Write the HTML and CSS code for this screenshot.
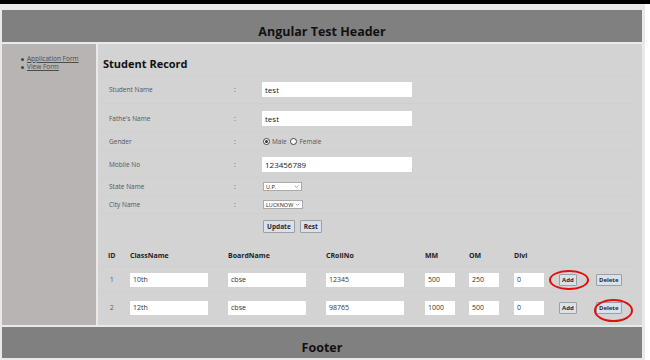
FILE: index.html
```html
<!DOCTYPE html>
<html>
<head>
<meta charset="utf-8">
<link rel="stylesheet" href="styles.css">
</head>
<body>
<div class="topbar"></div>
<div class="page">
  <header class="header"><h1>Angular Test Header</h1></header>
  <div class="main">
    <nav class="sidebar">
      <ul>
        <li><a href="#">Application Form</a></li>
        <li><a href="#">View Form</a></li>
      </ul>
    </nav>
    <section class="content">
      <h2>Student Record</h2>
      <table class="form">
        <tr class="r1"><td class="lbl">Student Name</td><td class="colon">:</td><td><input class="txt" type="text" value="test"></td></tr>
        <tr class="r2"><td class="lbl">Fathe's Name</td><td class="colon">:</td><td><input class="txt" type="text" value="test"></td></tr>
        <tr class="r3"><td class="lbl">Gender</td><td class="colon">:</td><td class="radios"><span class="radio on"></span>Male <span class="radio"></span>Female</td></tr>
        <tr class="r4"><td class="lbl">Mobile No</td><td class="colon">:</td><td><input class="txt" type="text" value="123456789"></td></tr>
        <tr class="r5"><td class="lbl">State Name</td><td class="colon">:</td><td><span class="select s-state">U.P.<svg viewBox="0 0 8 5" class="chev"><path d="M1 1 L4 4 L7 1" fill="none" stroke="#666" stroke-width="1"/></svg></span></td></tr>
        <tr class="r6"><td class="lbl">City Name</td><td class="colon">:</td><td><span class="select s-city">LUCKNOW<svg viewBox="0 0 8 5" class="chev"><path d="M1 1 L4 4 L7 1" fill="none" stroke="#666" stroke-width="1"/></svg></span></td></tr>
        <tr class="r7"><td></td><td></td><td><button class="btn">Update</button><button class="btn">Rest</button></td></tr>
      </table>
      <table class="grid">
        <colgroup>
          <col class="c-id"><col class="c-wide"><col class="c-wide"><col class="c-wide2"><col class="c-mm"><col class="c-om"><col class="c-om"><col class="c-add"><col class="c-del">
        </colgroup>
        <tr class="gh"><th>ID</th><th>ClassName</th><th>BoardName</th><th>CRollNo</th><th>MM</th><th>OM</th><th>Divi</th><th></th><th></th></tr>
        <tr class="g1">
          <td class="id">1</td>
          <td><input class="in-wide" type="text" value="10th"></td>
          <td><input class="in-wide" type="text" value="cbse"></td>
          <td><input class="in-wide" type="text" value="12345"></td>
          <td><input class="in-sm" type="text" value="500"></td>
          <td><input class="in-sm" type="text" value="250"></td>
          <td><input class="in-sm" type="text" value="0"></td>
          <td><span class="mark"><button class="btn sm">Add</button><span class="ring ring-add"></span></span></td>
          <td><button class="btn sm">Delete</button></td>
        </tr>
        <tr class="g2">
          <td class="id">2</td>
          <td><input class="in-wide" type="text" value="12th"></td>
          <td><input class="in-wide" type="text" value="cbse"></td>
          <td><input class="in-wide" type="text" value="98765"></td>
          <td><input class="in-sm" type="text" value="1000"></td>
          <td><input class="in-sm" type="text" value="500"></td>
          <td><input class="in-sm" type="text" value="0"></td>
          <td><button class="btn sm">Add</button></td>
          <td><span class="mark"><button class="btn sm">Delete</button><span class="ring ring-del"></span></span></td>
        </tr>
      </table>
    </section>
  </div>
  <footer class="footer"><h3>Footer</h3></footer>
</div>
</body>
</html>
```
FILE: styles.css
```css
* { box-sizing: border-box; }
html, body { margin: 0; padding: 0; background: #fff; }
body { font-family: "Open Sans", "Noto Sans", sans-serif; color: #222; }

.topbar { height: 4px; background: #000; }

.page {
  width: 645px;
  height: 356px;
  background: #e9e9e9;
  padding: 6px 3px 0 2px;
  display: flex;
  flex-direction: column;
  gap: 2px;
}

.header {
  height: 32px;
  background: #808080;
  display: flex;
  align-items: flex-end;
  justify-content: center;
}
.header h1 {
  margin: 0 0 1px;
  font-size: 12.5px;
  line-height: 18px;
  font-weight: 700;
  color: #111;
}

.main {
  height: 281px;
  display: flex;
  gap: 2px;
}

.sidebar {
  width: 94px;
  background: #b8b4b3;
  padding-top: 11px;
}
.sidebar ul {
  margin: 0;
  padding-left: 25px;
  font-size: 6.5px;
  line-height: 8px;
  list-style: none;
}
.sidebar li { color: #333; position: relative; }
.sidebar li::before {
  content: "";
  position: absolute;
  left: -6px;
  top: 2.5px;
  width: 3px;
  height: 3px;
  border-radius: 50%;
  background: #444;
}
.sidebar a { color: #4a4a4a; text-decoration: underline; }

.content {
  flex: 1;
  background: #d3d3d3;
  padding: 12px 6px 0 2px;
}
.content h2 {
  margin: 0 0 3px 3px;
  font-size: 11px;
  line-height: 16px;
  font-weight: 700;
  color: #111;
}

.form {
  width: 536px;
  border-collapse: collapse;
  font-size: 6.5px;
  color: #555;
}
.form td {
  padding: 0;
  vertical-align: middle;
  border-top: 1px solid #cfcfcf;
}
.form td.lbl { width: 127px; padding-left: 9px; }
.form td.colon { width: 34px; padding-left: 7px; }
.form tr.r1 td { height: 28px; }
.form tr.r2 td { height: 29px; }
.form tr.r3 td { height: 18px; }
.form tr.r4 td { height: 27px; }
.form tr.r5 td { height: 18px; }
.form tr.r6 td { height: 18px; }
.form tr.r7 td { height: 26px; }

.txt {
  display: block;
  width: 150px;
  height: 15px;
  border: 0;
  background: #fff;
  padding: 0 0 0 3px;
  margin-left: 1px;
  font-family: "Open Sans", "Noto Sans", sans-serif;
  font-size: 8px;
  color: #222;
  outline: none;
}

.radios { color: #555; font-size: 6.5px; }
.radio {
  display: inline-block;
  width: 7px;
  height: 7px;
  border: 1px solid #444;
  border-radius: 50%;
  background: #fff;
  vertical-align: -1px;
  margin: 0 2px 0 2px;
  position: relative;
}
.radio.on::after {
  content: "";
  position: absolute;
  left: 1px; top: 1px;
  width: 3px; height: 3px;
  border-radius: 50%;
  background: #333;
}

.select {
  display: inline-flex;
  align-items: center;
  justify-content: space-between;
  height: 9px;
  margin-left: 2px;
  background: #fff;
  border: 1px solid #aaa;
  font-size: 5.5px;
  color: #222;
  padding: 0 2px 0 2px;
}
.s-state { width: 39px; }
.s-city { width: 40px; }
.chev { width: 5px; height: 3px; }

.btn {
  font-family: "Open Sans", "Noto Sans", sans-serif;
  font-weight: 700;
  font-size: 6.5px;
  color: #1f2a3a;
  background: #dbe1e8;
  border: 1px solid #9aa0a6;
  height: 13px;
  padding: 0 3px;
  margin: 0 3px 0 2px;
  line-height: 11px;
  border-radius: 1px;
}
.btn.sm { margin: 0; height: 12px; font-size: 6px; line-height: 10px; padding: 0 2px; }

.grid {
  margin-top: 6px;
  margin-left: 3px;
  border-collapse: collapse;
  font-size: 6.5px;
  color: #555;
  table-layout: fixed;
  width: 533px;
}
.c-id { width: 22px; }
.c-wide { width: 98px; }
.c-wide2 { width: 99px; }
.c-mm { width: 44px; }
.c-om { width: 45px; }
.c-add { width: 37px; }
.c-del { width: 45px; }

.grid th, .grid td {
  padding: 0 0 0 5px;
  text-align: left;
  vertical-align: middle;
  border-top: 1px solid #cfcfcf;
}
.grid th { font-weight: 700; color: #222; font-size: 7px; }
.grid tr.gh th { height: 21px; border-top: 0; }
.grid tr.g1 td { height: 26px; }
.grid tr.g2 td { height: 30px; }
.grid td.id { padding-left: 7px; }

.in-wide, .in-sm {
  display: block;
  height: 14px;
  border: 0;
  background: #fff;
  padding: 0 0 0 3px;
  font-family: "Open Sans", "Noto Sans", sans-serif;
  font-size: 7px;
  color: #333;
  outline: none;
}
.in-wide { width: 78px; }
.in-sm { width: 30px; }

.mark { position: relative; display: inline-block; }
.ring {
  position: absolute;
  border: 2px solid #e01010;
  border-radius: 50%;
  pointer-events: none;
}
.ring-add { left: -10px; top: -4px; width: 40px; height: 20px; }
.ring-del { left: -2px; top: -3px; width: 39px; height: 23px; }

.footer {
  height: 31px;
  background: #808080;
  display: flex;
  align-items: flex-end;
  justify-content: center;
}
.footer h3 {
  margin: 0 0 1px;
  font-size: 12.5px;
  line-height: 18px;
  font-weight: 700;
  color: #111;
}
```
